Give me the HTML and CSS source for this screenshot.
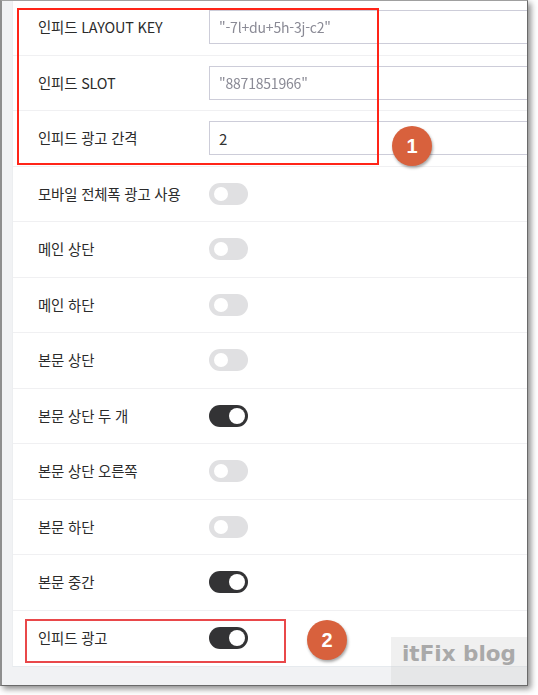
FILE: index.html
```html
<!DOCTYPE html>
<html lang="ko">
<head>
<meta charset="utf-8">
<title>인피드 설정</title>
<link rel="stylesheet" href="styles.css">
</head>
<body>
<div class="frame">
  <div class="card">
    <div class="row">
      <span class="label">인피드 LAYOUT KEY</span>
      <div class="field"><span class="blurred">"-7l+du+5h-3j-c2"</span></div>
    </div>
    <div class="row">
      <span class="label">인피드 SLOT</span>
      <div class="field"><span class="blurred">"8871851966"</span></div>
    </div>
    <div class="row">
      <span class="label">인피드 광고 간격</span>
      <div class="field"><span class="value">2</span></div>
    </div>
    <div class="row">
      <span class="label">모바일 전체폭 광고 사용</span>
      <span class="toggle"></span>
    </div>
    <div class="row">
      <span class="label">메인 상단</span>
      <span class="toggle"></span>
    </div>
    <div class="row">
      <span class="label">메인 하단</span>
      <span class="toggle"></span>
    </div>
    <div class="row">
      <span class="label">본문 상단</span>
      <span class="toggle"></span>
    </div>
    <div class="row">
      <span class="label">본문 상단 두 개</span>
      <span class="toggle on"></span>
    </div>
    <div class="row">
      <span class="label">본문 상단 오른쪽</span>
      <span class="toggle"></span>
    </div>
    <div class="row">
      <span class="label">본문 하단</span>
      <span class="toggle"></span>
    </div>
    <div class="row">
      <span class="label">본문 중간</span>
      <span class="toggle on"></span>
    </div>
    <div class="row last">
      <span class="label">인피드 광고</span>
      <span class="toggle on"></span>
    </div>
  </div>

  <div class="mark mark-1"></div>
  <div class="mark mark-2"></div>
  <div class="badge badge-1">1</div>
  <div class="badge badge-2">2</div>
  <div class="watermark">itFix blog</div>
</div>
</body>
</html>
```
FILE: styles.css
```css
* { box-sizing: border-box; }

html, body {
  margin: 0;
  padding: 0;
  background: #ffffff;
}

body {
  width: 538px;
  height: 695px;
  overflow: hidden;
  font-family: "Noto Sans CJK KR", "Noto Sans", sans-serif;
}

.frame {
  position: relative;
  width: 528px;
  height: 686px;
  background: #f1f2f4;
  border-left: 2px solid #8e8e8e;
  border-top: 1px solid #a0a0a0;
  border-right: 1px solid #6a6a6a;
  border-bottom: 1px solid #6a6a6a;
  box-shadow: 3px 3px 6px rgba(0, 0, 0, 0.45);
  overflow: hidden;
  padding: 0 0 0 10px;
}

.card {
  width: 540px;
  margin-top: -1px;
  background: #ffffff;
  border-left: 1px solid #eceef0;
  border-bottom: 1px solid #e6eaee;
}

.row {
  display: grid;
  grid-template-columns: 171px 1fr;
  align-items: center;
  height: 55.5px;
  padding-left: 25px;
  border-bottom: 1px solid #f0f0f2;
}

.row.last { border-bottom: none; }

.label {
  font-size: 14.4px;
  color: #2b2b2b;
  letter-spacing: -0.15px;
  white-space: nowrap;
  margin-top: -1px;
}

.field {
  height: 34px;
  border: 1px solid #cdcdd9;
  display: flex;
  align-items: center;
  padding-left: 9px;
  font-size: 15px;
  color: #333333;
}

.blurred {
  color: #8a8a95;
  font-size: 14px;
  letter-spacing: -0.2px;
  filter: blur(0.6px);
}

.value { color: #333333; }

.toggle {
  position: relative;
  width: 39px;
  height: 22px;
  border-radius: 11px;
  background: #e0e0e2;
}

.toggle::after {
  content: "";
  position: absolute;
  left: 5px;
  top: 4px;
  width: 14px;
  height: 14px;
  border-radius: 50%;
  background: #ffffff;
}

.toggle.on { background: #333335; }

.toggle.on::after {
  left: auto;
  right: 3px;
  top: 3px;
  width: 16px;
  height: 16px;
}

.mark {
  position: absolute;
  border: 2px solid #ff2418;
}

.mark-1 {
  left: 15px;
  top: 7px;
  width: 362px;
  height: 157px;
}

.mark-2 {
  left: 23px;
  top: 618px;
  width: 261px;
  height: 44px;
  border-color: #e9484a;
}

.badge {
  position: absolute;
  width: 40px;
  height: 40px;
  border-radius: 50%;
  background: #d8613d;
  color: #ffffff;
  font-family: "Liberation Sans", Arial, sans-serif;
  font-weight: bold;
  font-size: 20px;
  display: flex;
  align-items: center;
  justify-content: center;
  box-shadow: 1px 2px 3px rgba(0, 0, 0, 0.35);
}

.badge-1 { left: 390px; top: 125px; }
.badge-2 { left: 305px; top: 619px; }

.watermark {
  position: absolute;
  left: 389px;
  top: 636px;
  width: 150px;
  height: 60px;
  padding: 4px 0 0 11px;
  background: rgba(205, 205, 205, 0.3);
  color: #a9a9a9;
  font-family: "DejaVu Sans", sans-serif;
  font-weight: bold;
  font-size: 21.5px;
  letter-spacing: 0;
  white-space: nowrap;
}
```
